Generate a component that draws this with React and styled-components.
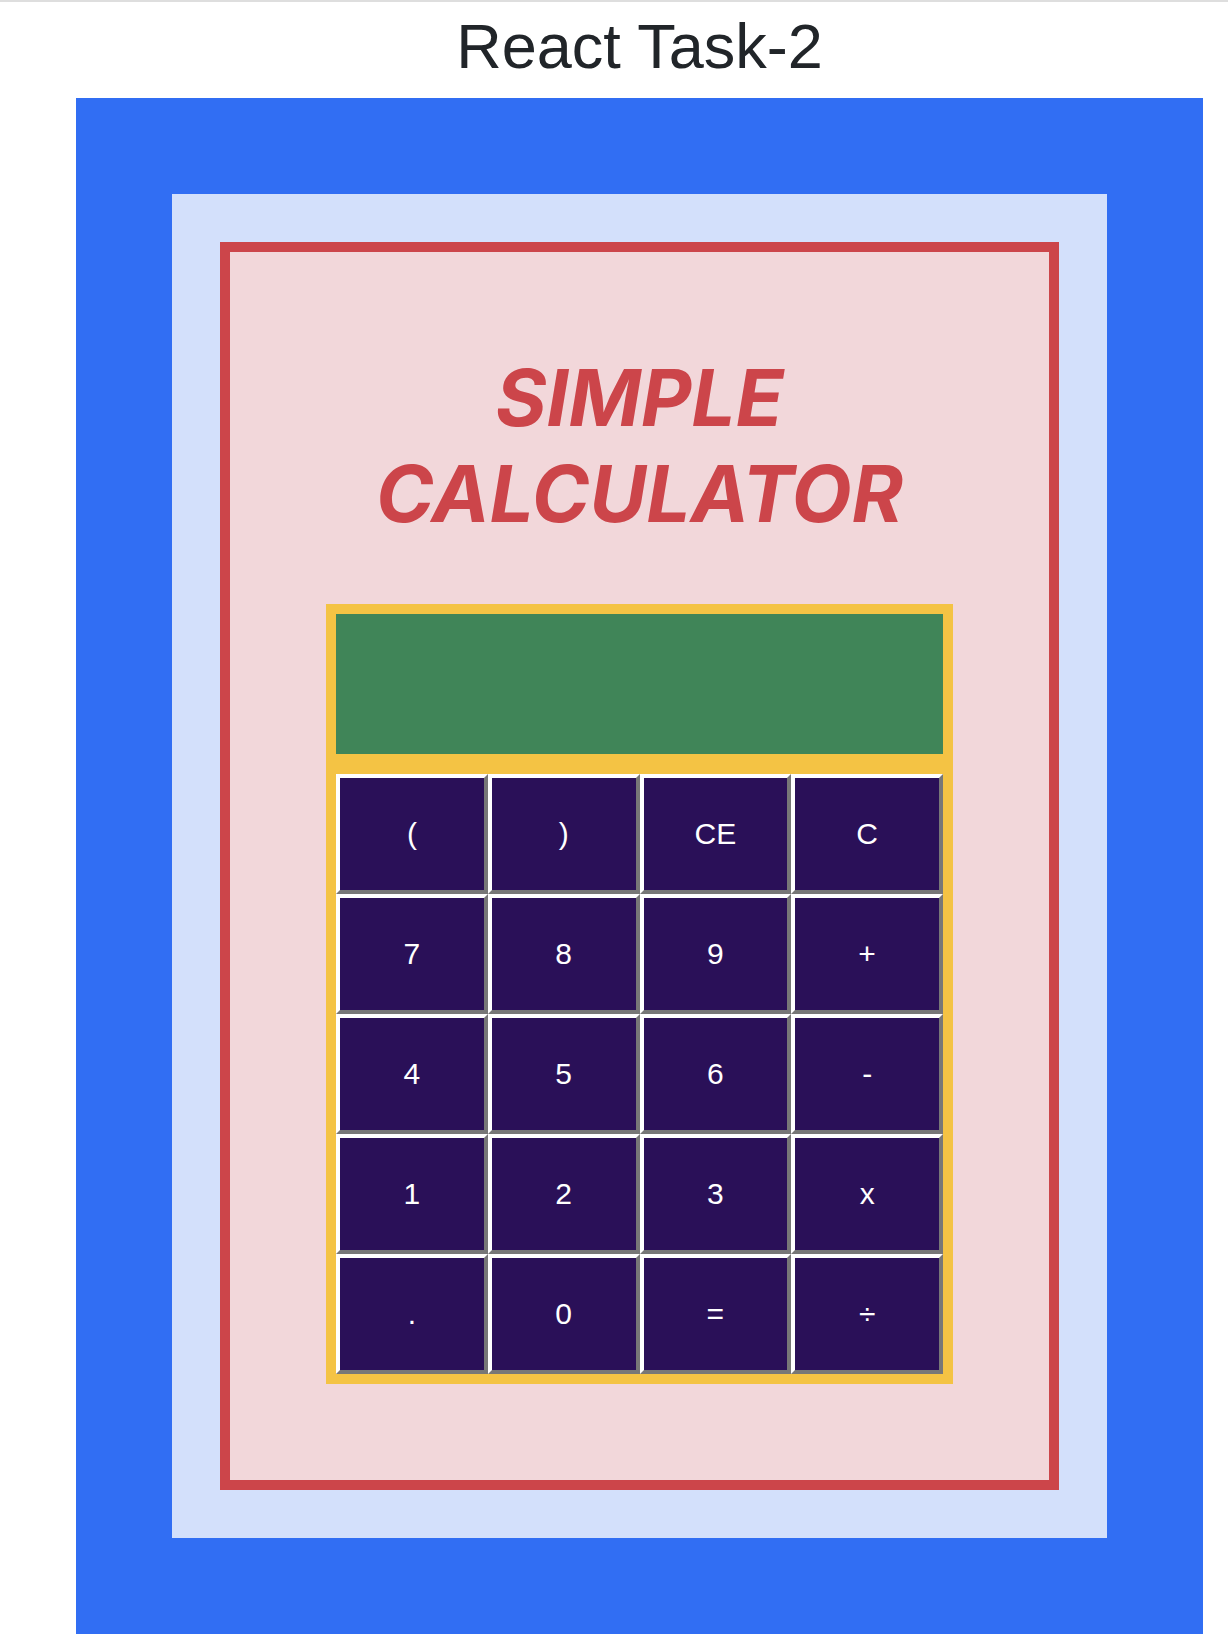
import styled, { createGlobalStyle } from "styled-components";

const GlobalStyle = createGlobalStyle`
    body {
        margin: 0;
        font-family: "Liberation Sans", Arial, sans-serif;
        background: #ffffff;
    }
`;

const TopRule = styled.div`
    height: 2px;
    background-color: #dedede;
`;

const Page = styled.div`
    padding: 0 25px 0 76px;
`;

const PageTitle = styled.h1`
    margin: 7px 0 15px;
    font-size: 63px;
    line-height: 74px;
    font-weight: 400;
    color: #212529;
    text-align: center;
`;

const BlueFrame = styled.div`
    background-color: #316ef3;
    padding: 96px;
`;

const LightFrame = styled.div`
    background-color: #d3e0fb;
    padding: 48px;
`;

const CalcCard = styled.div`
    border: 10px solid #cc454a;
    background-color: #f2d7da;
    padding: 98px 0 96px;
    display: flex;
    flex-direction: column;
    align-items: center;
`;

const Heading = styled.h2`
    margin: 0 0 62px;
    width: 560px;
    font-family: Inter, "Liberation Sans", sans-serif;
    font-size: 78px;
    line-height: 96px;
    font-weight: 700;
    font-style: italic;
    color: #cc454a;
    text-align: center;
`;

const Calculator = styled.div`
    width: 607px;
    padding: 10px;
    background-color: #f4c344;
`;

const Display = styled.div`
    height: 140px;
    margin-bottom: 20px;
    background-color: #408558;
`;

const Keypad = styled.div`
    display: grid;
    grid-template-columns: repeat(4, 1fr);
`;

const Key = styled.button`
    height: 120px;
    margin: 0;
    padding: 0;
    border: 4px solid;
    border-color: #ffffff #777777 #777777 #ffffff;
    background-color: #2a1058;
    color: #ffffff;
    font-family: "Liberation Sans", Arial, sans-serif;
    font-size: 30px;
    cursor: pointer;
`;

const keys = [
    "(", ")", "CE", "C",
    "7", "8", "9", "+",
    "4", "5", "6", "-",
    "1", "2", "3", "x",
    ".", "0", "=", "÷",
];

function App() {
    return <>
        <GlobalStyle />
        <TopRule />
        <Page>
            <PageTitle>React Task-2</PageTitle>
            <BlueFrame>
                <LightFrame>
                    <CalcCard>
                        <Heading>SIMPLE CALCULATOR</Heading>
                        <Calculator>
                            <Display />
                            <Keypad>
                                {keys.map((k) => <Key key={k}>{k}</Key>)}
                            </Keypad>
                        </Calculator>
                    </CalcCard>
                </LightFrame>
            </BlueFrame>
        </Page>
    </>
};

export default App;
